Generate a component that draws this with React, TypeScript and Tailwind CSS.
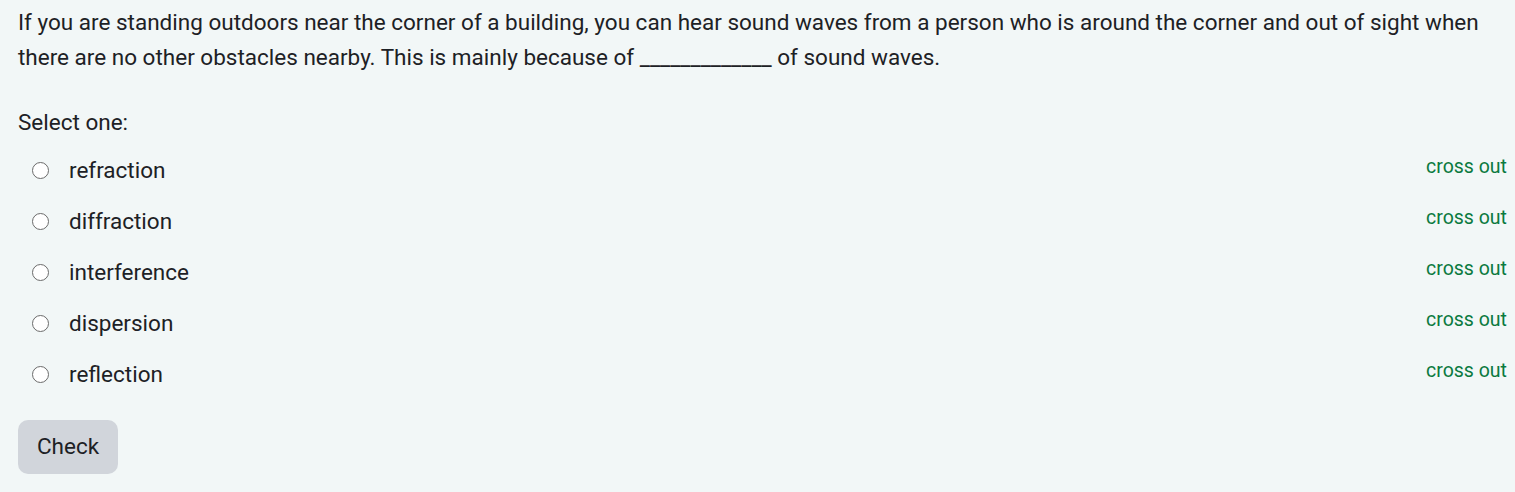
import React from "react";

const options = ["refraction", "diffraction", "interference", "dispersion", "reflection"];

export default function App() {
  return (
    <div
      className="min-h-[492px] w-full bg-[#f2f7f7] text-[#1d2125] pl-[18px] pr-[8px] pt-[5px]"
      style={{ fontFamily: "Roboto, 'Liberation Sans', sans-serif" }}
    >
      <p className="text-[22.5px] leading-[35px]">
        If you are standing outdoors near the corner of a building, you can hear sound waves from a person who is around the corner and out of sight when there are no other obstacles nearby. This is mainly because of _____________ of sound waves.
      </p>
      <div className="mt-[30px] text-[22.5px] leading-[35px]">Select one:</div>
      <div className="mt-[5px] flex flex-col">
        {options.map((o) => (
          <div key={o} className="flex h-[51px] items-center justify-between">
            <label className="flex items-center">
              <span className="ml-[14px] box-border h-[17px] w-[17px] rounded-full border-[1.5px] border-[#6b6b6b] bg-white" />
              <span className="ml-[20px] text-[22.5px] leading-[35px]">{o}</span>
            </label>
            <span className="-mt-[8px] text-[19.5px] leading-[24px] text-[#0b7a3f]">cross out</span>
          </div>
        ))}
      </div>
      <button className="mt-[20px] h-[54px] w-[100px] rounded-[10px] bg-[#d1d5db] text-[22.5px] text-[#1d2125]">
        Check
      </button>
    </div>
  );
}
